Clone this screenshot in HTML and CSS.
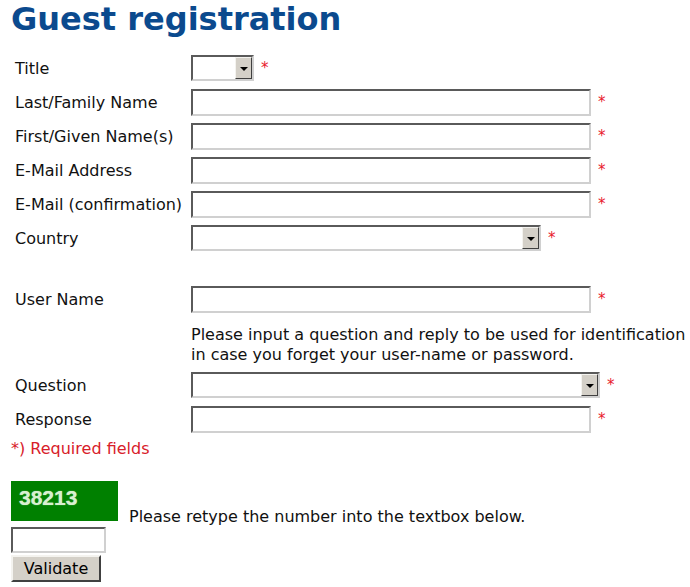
FILE: index.html
```html
<!DOCTYPE html>
<html lang="en">
<head>
    <meta charset="UTF-8">
    <title>Guest registration</title>
    <link rel="stylesheet" href="styles.css">
</head>
<body>
    <div class="page">
        <h1>Guest registration</h1>

        <form class="form">
            <div class="row">
                <label>Title</label>
                <div class="field">
                    <span class="select select-title"><span class="select-arrow"></span></span>
                    <span class="req">*</span>
                </div>
            </div>
            <div class="row">
                <label>Last/Family Name</label>
                <div class="field"><input type="text" class="text-input"><span class="req">*</span></div>
            </div>
            <div class="row">
                <label>First/Given Name(s)</label>
                <div class="field"><input type="text" class="text-input"><span class="req">*</span></div>
            </div>
            <div class="row">
                <label>E-Mail Address</label>
                <div class="field"><input type="text" class="text-input"><span class="req">*</span></div>
            </div>
            <div class="row">
                <label>E-Mail (confirmation)</label>
                <div class="field"><input type="text" class="text-input"><span class="req">*</span></div>
            </div>
            <div class="row">
                <label>Country</label>
                <div class="field">
                    <span class="select select-country"><span class="select-arrow"></span></span>
                    <span class="req">*</span>
                </div>
            </div>

            <div class="spacer"></div>

            <div class="row">
                <label>User Name</label>
                <div class="field"><input type="text" class="text-input"><span class="req">*</span></div>
            </div>

            <p class="info">Please input a question and reply to be used for identification<br>in case you forget your user-name or password.</p>

            <div class="row">
                <label>Question</label>
                <div class="field">
                    <span class="select select-question"><span class="select-arrow"></span></span>
                    <span class="req">*</span>
                </div>
            </div>
            <div class="row">
                <label>Response</label>
                <div class="field"><input type="text" class="text-input"><span class="req">*</span></div>
            </div>

            <p class="required">*) Required fields</p>

            <!-- captcha -->
            <div class="captcha">
                <span class="captcha-img">38213</span>
                <span class="captcha-text">Please retype the number into the textbox below.</span>
            </div>
            <input type="text" class="captcha-input">
            <button type="button" class="validate">Validate</button>
        </form>
    </div>
</body>
</html>
```

FILE: styles.css
```css
body {
    margin: 0;
    background-color: #fff;
    font-family: 'DejaVu Sans', Verdana, sans-serif;
    font-size: 16px;
    color: #111;
}
.page {
    padding: 0 0 0 11px;
}
h1 {
    margin: 0;
    font-size: 32px;
    font-weight: bold;
    color: #0b4a8e;
    line-height: 38px;
}
.form {
    margin-top: 13px;
}
.row {
    display: grid;
    grid-template-columns: 180px auto;
    align-items: center;
    height: 34px;
}
.row label {
    padding-left: 4px;
    padding-top: 1px;
}
.field {
    display: flex;
    align-items: center;
}
.text-input {
    box-sizing: border-box;
    width: 400px;
    height: 27px;
    margin: 0;
    padding: 0 3px;
    border: 2px solid;
    border-color: #5a5a5a #d0d0d0 #d0d0d0 #5a5a5a;
    background: #fff;
    font-family: inherit;
    font-size: 16px;
}
.req {
    color: #e8202c;
    font-size: 15px;
    margin-left: 7px;
}
.select {
    box-sizing: border-box;
    display: flex;
    justify-content: flex-end;
    height: 26px;
    border: 2px solid;
    border-color: #5a5a5a #d0d0d0 #d0d0d0 #5a5a5a;
    background: #fff;
}
.select-title { width: 63px; }
.select-country { width: 350px; }
.select-question { width: 409px; }
.select-arrow {
    box-sizing: border-box;
    width: 17px;
    border: 1px solid;
    border-color: #f4f3ef #404040 #404040 #f4f3ef;
    background: #d4d0c8;
    display: flex;
    align-items: center;
    justify-content: center;
}
.select-arrow::after {
    content: "";
    border-left: 4px solid transparent;
    border-right: 4px solid transparent;
    border-top: 4px solid #000;
    margin-top: 1px;
}
.spacer {
    height: 27px;
}
.info {
    margin: 9px 0 3px 180px;
    line-height: 20px;
}
.required {
    margin: 3px 0 0 0;
    color: #d8202a;
    line-height: 20px;
}
.captcha {
    margin-top: 22px;
    display: flex;
    align-items: flex-end;
}
.captcha-img {
    box-sizing: border-box;
    width: 107px;
    height: 40px;
    background: #008000;
    color: #d8f0d0;
    font-family: 'Liberation Sans', Arial, sans-serif;
    font-weight: bold;
    font-size: 21px;
    padding: 5px 0 0 8px;
    text-shadow: 0 0 1px #b8e0b0;
}
.captcha-text {
    margin-left: 11px;
    line-height: 18px;
    margin-bottom: -5px;
}
.captcha-input {
    display: block;
    box-sizing: border-box;
    margin: 6px 0 0 0;
    width: 95px;
    height: 26px;
    border: 2px solid;
    border-color: #5a5a5a #d0d0d0 #d0d0d0 #5a5a5a;
    background: #fff;
}
.validate {
    display: block;
    box-sizing: border-box;
    margin-top: 2px;
    width: 90px;
    height: 27px;
    padding: 0;
    border: 2px solid;
    border-color: #f4f3ef #404040 #404040 #f4f3ef;
    background: #d4d0c8;
    font-family: inherit;
    font-size: 16px;
    color: #000;
}
```
